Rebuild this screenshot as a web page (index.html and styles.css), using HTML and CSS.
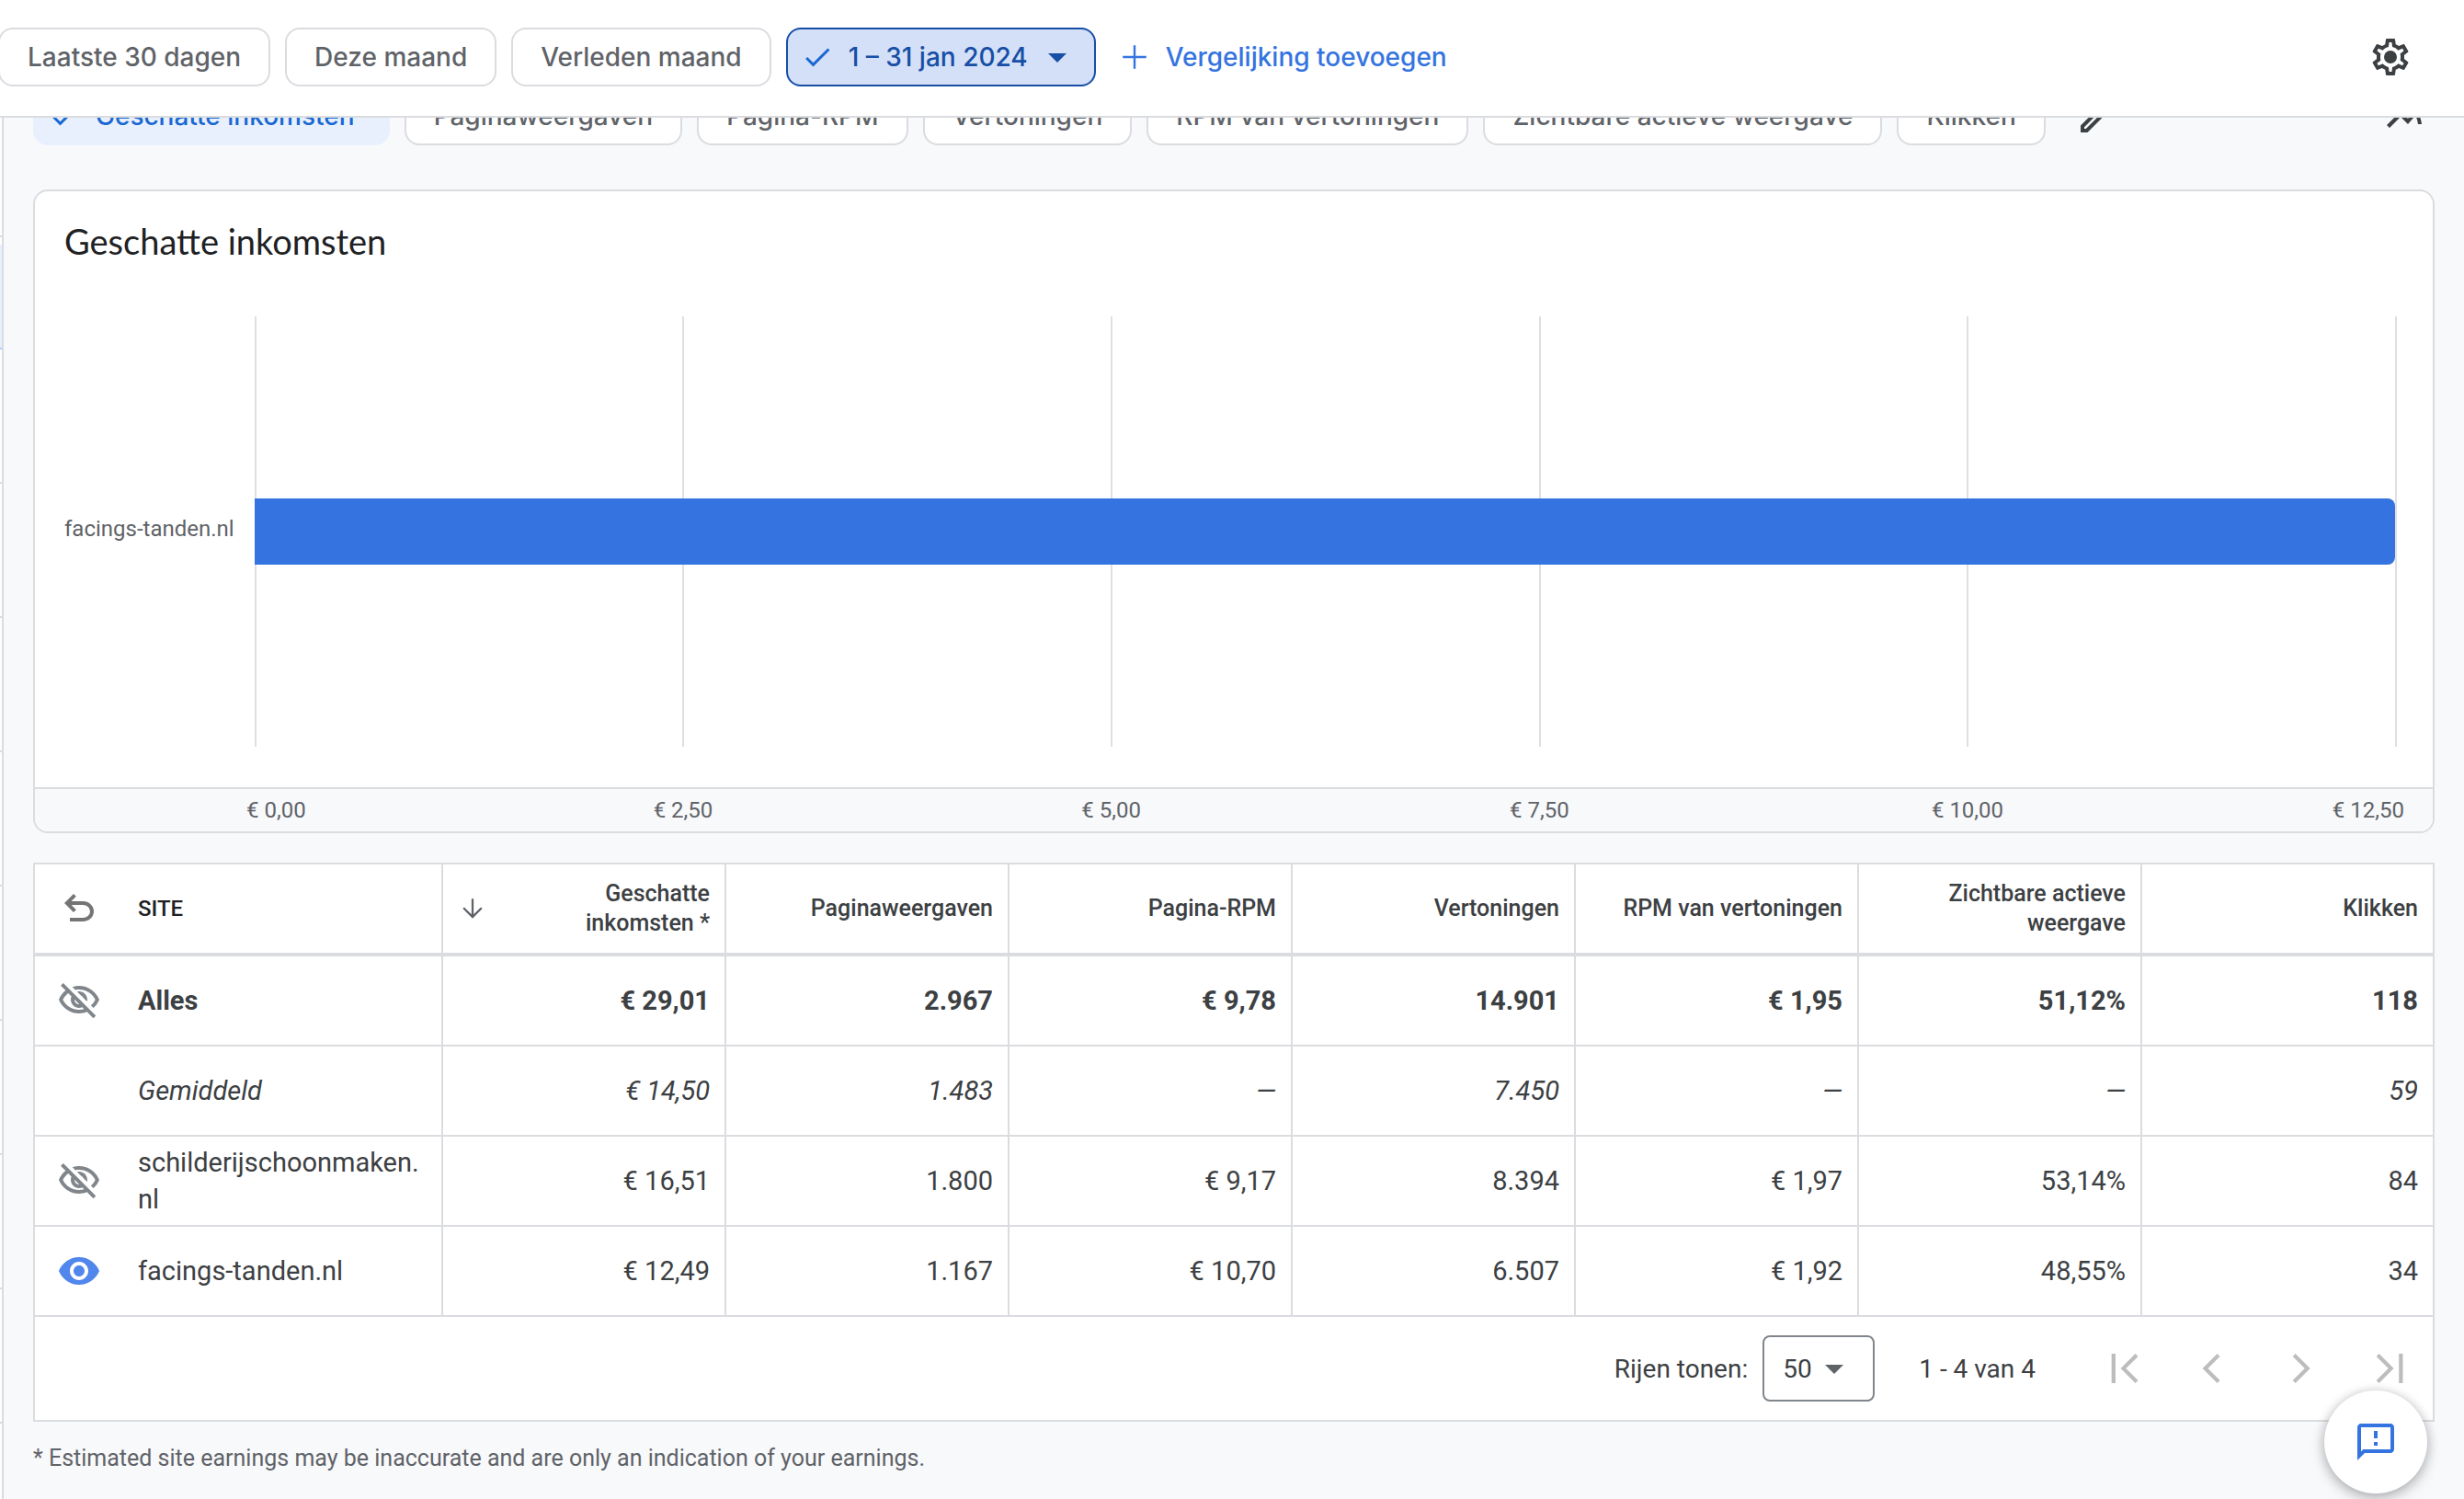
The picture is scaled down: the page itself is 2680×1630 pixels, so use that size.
FILE: index.html
```html
<!DOCTYPE html>
<html lang="nl">
  <head>
    <meta charset="UTF-8" />
    <meta name="viewport" content="width=device-width, initial-scale=1.0" />
    <title>Rapporten</title>
    <link rel="stylesheet" href="styles.css">
  </head>
  <body>
    <header class="topbar">
      <button class="chip">Laatste 30 dagen</button>
      <button class="chip">Deze maand</button>
      <button class="chip">Verleden maand</button>
      <button class="chip chip-date">
        <svg class="icon-check" viewBox="0 0 24 24"><path d="M9 16.17L4.83 12l-1.42 1.41L9 19 21 7l-1.41-1.41z" /></svg>
        1 – 31 jan 2024
        <svg class="icon" viewBox="0 0 24 24"><path d="M7 10l5 5 5-5z" /></svg>
      </button>
      <button class="compare">
        <svg class="icon-check" viewBox="0 0 24 24"><path d="M20.5 12.8h-7.7v7.7h-1.6v-7.7H3.5v-1.6h7.7V3.5h1.6v7.7h7.7z" /></svg>
        Vergelijking toevoegen
      </button>
      <button class="icon-button settings" aria-label="Instellingen">
        <svg class="icon" viewBox="0 0 24 24"><path d="M19.43 12.98c.04-.32.07-.64.07-.98 0-.34-.03-.66-.07-.98l2.11-1.65c.19-.15.24-.42.12-.64l-2-3.46c-.09-.16-.26-.25-.44-.25-.06 0-.12.01-.17.03l-2.49 1c-.52-.4-1.08-.73-1.69-.98l-.38-2.65C14.46 2.18 14.25 2 14 2h-4c-.25 0-.46.18-.49.42l-.38 2.65c-.61.25-1.17.59-1.69.98l-2.49-1c-.06-.02-.12-.03-.18-.03-.17 0-.34.09-.43.25l-2 3.46c-.13.22-.07.49.12.64l2.11 1.65c-.04.32-.07.65-.07.98 0 .33.03.66.07.98l-2.11 1.65c-.19.15-.24.42-.12.64l2 3.46c.09.16.26.25.44.25.06 0 .12-.01.17-.03l2.49-1c.52.4 1.08.73 1.69.98l.38 2.65c.03.24.24.42.49.42h4c.25 0 .46-.18.49-.42l.38-2.65c.61-.25 1.17-.59 1.69-.98l2.49 1c.06.02.12.03.18.03.17 0 .34-.09.43-.25l2-3.46c.12-.22.07-.49-.12-.64l-2.11-1.65zm-1.98-1.71c.04.31.05.52.05.73 0 .21-.02.43-.05.73l-.14 1.13.89.7 1.08.84-.7 1.21-1.27-.51-1.04-.42-.9.68c-.43.32-.84.56-1.25.73l-1.06.43-.16 1.13-.2 1.35h-1.4l-.19-1.35-.16-1.13-1.06-.43c-.43-.18-.83-.41-1.23-.71l-.91-.7-1.06.43-1.27.51-.7-1.21 1.08-.84.89-.7-.14-1.13c-.03-.31-.05-.54-.05-.74s.02-.43.05-.73l.14-1.13-.89-.7-1.08-.84.7-1.21 1.27.51 1.04.42.9-.68c.43-.32.84-.56 1.25-.73l1.06-.43.16-1.13.2-1.35h1.39l.19 1.35.16 1.13 1.06.43c.43.18.83.41 1.23.71l.91.7 1.06-.43 1.27-.51.7 1.21-1.07.85-.89.7.14 1.13z" /><circle cx="12" cy="12" r="3.5" /></svg>
      </button>
    </header>

    <div class="layout">
      <nav class="rail">
        <div class="rail-item rail-first"></div>
        <div class="rail-item rail-active"></div>
        <div class="rail-item"></div>
        <div class="rail-item"></div>
        <div class="rail-item"></div>
        <div class="rail-item"></div>
        <div class="rail-item"></div>
        <div class="rail-item"></div>
        <div class="rail-item"></div>
        <div class="rail-item"></div>
      </nav>

      <main class="report">
        <div class="metrics">
          <button class="chip chip-metric">
            <svg class="icon-check" viewBox="0 0 24 24"><path d="M9 16.17L4.83 12l-1.42 1.41L9 19 21 7l-1.41-1.41z" /></svg>
            Geschatte inkomsten
          </button>
          <button class="chip">Paginaweergaven</button>
          <button class="chip">Pagina-RPM</button>
          <button class="chip">Vertoningen</button>
          <button class="chip">RPM van vertoningen</button>
          <button class="chip">Zichtbare actieve weergave</button>
          <button class="chip">Klikken</button>
          <button class="icon-button edit" aria-label="Bewerken">
            <svg class="icon" viewBox="0 0 24 24"><path d="M3 17.25V21h3.75L17.81 9.94l-3.75-3.75L3 17.25zM5.92 19H5v-.92l9.06-9.06.92.92L5.92 19zM20.71 5.63l-2.34-2.34c-.39-.39-1.02-.39-1.41 0l-1.83 1.83 3.75 3.75 1.83-1.83c.39-.39.39-1.02 0-1.41z" /></svg>
          </button>
          <button class="icon-button chart-type" aria-label="Diagramtype">
            <svg class="icon" viewBox="0 0 24 24"><path d="M22 6.92l-1.41-1.41-2.85 3.21C15.68 6.4 12.83 5 9.61 5 6.72 5 4.07 6.16 2 8l1.42 1.42C5.12 7.93 7.27 7 9.61 7c2.74 0 5.09 1.26 6.77 3.24l-2.88 3.24-4-4L2 16.99l1.5 1.5 6-6.01 4 4 4.05-4.55c.75 1.35 1.25 2.9 1.44 4.55H21c-.22-2.3-.95-4.39-2.04-6.14L22 6.92z" /></svg>
          </button>
        </div>

        <section class="card">
          <h2>Geschatte inkomsten</h2>
          <div class="chart">
            <span class="chart-label">facings-tanden.nl</span>
            <div class="plot">
              <div class="gridlines"><i></i><i></i><i></i><i></i><i></i></div>
              <div class="bar" style="width: 99.92%"></div>
            </div>
          </div>
          <div class="axis">
            <span>€ 0,00</span>
            <span>€ 2,50</span>
            <span>€ 5,00</span>
            <span>€ 7,50</span>
            <span>€ 10,00</span>
            <span>€ 12,50</span>
          </div>
        </section>

        <section class="data">
          <table>
            <thead>
              <tr>
                <th class="site">
                  <div class="site-cell">
                    <button class="icon-button" aria-label="Terug"><svg class="icon icon-undo" viewBox="0 -960 960 960"><path d="M280-200v-80h284q63 0 109.5-40T720-420q0-60-46.5-100T564-560H312l104 104-56 56-200-200 200-200 56 56-104 104h252q97 0 166.5 63T800-420q0 94-69.5 157T564-200H280Z" /></svg></button>
                    <span class="site-title">SITE</span>
                  </div>
                </th>
                <th>
                  <div class="sorted">
                    <svg class="icon-sort" viewBox="0 0 24 24"><path d="M20 12l-1.2-1.2-5.95 5.95V4h-1.7v12.75L5.2 10.8 4 12l8 8 8-8z" /></svg>
                    <span>Geschatte<br />inkomsten *</span>
                  </div>
                </th>
                <th>Paginaweergaven</th>
                <th>Pagina-RPM</th>
                <th>Vertoningen</th>
                <th>RPM van vertoningen</th>
                <th>Zichtbare actieve<br />weergave</th>
                <th class="clicks">Klikken</th>
              </tr>
            </thead>
            <tbody>
              <tr class="total">
                <td>
                  <div class="site-cell">
                    <button class="icon-button" aria-label="Alles tonen"><svg class="icon icon-hidden" viewBox="0 0 24 24"><path id="eye-off" d="M12 6c3.79 0 7.17 2.13 8.82 5.5-.59 1.22-1.42 2.27-2.41 3.12l1.41 1.41c1.39-1.23 2.49-2.77 3.18-4.53C21.27 7.11 17 4 12 4c-1.27 0-2.49.2-3.64.57l1.65 1.65C10.66 6.09 11.32 6 12 6zm-1.07 1.14L13 9.21c.57.25 1.03.71 1.28 1.28l2.07 2.07c.08-.34.14-.7.14-1.07C16.5 9.01 14.48 7 12 7c-.37 0-.72.05-1.07.14zM2.01 3.87l2.68 2.68C3.06 7.83 1.77 9.53 1 11.5 2.73 15.89 7 19 12 19c1.52 0 2.98-.29 4.32-.82l3.42 3.42 1.41-1.41L3.42 2.45 2.01 3.87zm7.5 7.5l2.61 2.61c-.04.01-.08.02-.12.02-1.38 0-2.5-1.12-2.5-2.5 0-.05.01-.08.01-.13zm-3.4-3.4l1.75 1.75c-.23.55-.36 1.15-.36 1.78 0 2.48 2.02 4.5 4.5 4.5.63 0 1.23-.13 1.77-.36l.98.98c-.88.24-1.8.38-2.75.38-3.79 0-7.17-2.13-8.82-5.5.7-1.43 1.72-2.61 2.93-3.53z" /></svg></button>
                    <span>Alles</span>
                  </div>
                </td>
                <td>€ 29,01</td>
                <td>2.967</td>
                <td>€ 9,78</td>
                <td>14.901</td>
                <td>€ 1,95</td>
                <td>51,12%</td>
                <td>118</td>
              </tr>
              <tr class="average">
                <td>
                  <div class="site-cell"><span class="icon"></span><span>Gemiddeld</span></div>
                </td>
                <td>€ 14,50</td>
                <td>1.483</td>
                <td>—</td>
                <td>7.450</td>
                <td>—</td>
                <td>—</td>
                <td>59</td>
              </tr>
              <tr>
                <td>
                  <div class="site-cell">
                    <button class="icon-button" aria-label="schilderijschoonmaken.nl tonen"><svg class="icon icon-hidden" viewBox="0 0 24 24"><use href="#eye-off" /></svg></button>
                    <span>schilderijschoonmaken.<wbr />nl</span>
                  </div>
                </td>
                <td>€ 16,51</td>
                <td>1.800</td>
                <td>€ 9,17</td>
                <td>8.394</td>
                <td>€ 1,97</td>
                <td>53,14%</td>
                <td>84</td>
              </tr>
              <tr>
                <td>
                  <div class="site-cell">
                    <button class="icon-button" aria-label="facings-tanden.nl verbergen"><svg class="icon icon-visible" viewBox="0 0 24 24"><path d="M12 4.5C7 4.5 2.73 7.61 1 12c1.73 4.39 6 7.5 11 7.5s9.27-3.11 11-7.5c-1.73-4.39-6-7.5-11-7.5zM12 17c-2.76 0-5-2.24-5-5s2.24-5 5-5 5 2.24 5 5-2.24 5-5 5zm0-8c-1.66 0-3 1.34-3 3s1.34 3 3 3 3-1.34 3-3-1.34-3-3-3z" /></svg></button>
                    <span>facings-tanden.nl</span>
                  </div>
                </td>
                <td>€ 12,49</td>
                <td>1.167</td>
                <td>€ 10,70</td>
                <td>6.507</td>
                <td>€ 1,92</td>
                <td>48,55%</td>
                <td>34</td>
              </tr>
            </tbody>
          </table>
          <div class="pager">
            <label for="rows">Rijen tonen:</label>
            <div class="select">
              <select id="rows">
                <option>50</option>
                <option>100</option>
              </select>
              <svg class="icon" viewBox="0 0 24 24"><path d="M7 10l5 5 5-5z" /></svg>
            </div>
            <span class="range">1 - 4 van 4</span>
            <button class="page-button" aria-label="Eerste pagina" disabled><svg viewBox="0 0 24 24"><path d="M17.8 7.1L16.7 6l-6 6 6 6 1.1-1.1-4.9-4.9zM7 6h1.6v12H7z" /></svg></button>
            <button class="page-button" aria-label="Vorige pagina" disabled><svg viewBox="0 0 24 24"><path d="M15.2 7.1L14.1 6l-6 6 6 6 1.1-1.1-4.9-4.9z" /></svg></button>
            <button class="page-button" aria-label="Volgende pagina" disabled><svg viewBox="0 0 24 24"><path d="M8.9 7.1L10 6l6 6-6 6-1.1-1.1 4.9-4.9z" /></svg></button>
            <button class="page-button" aria-label="Laatste pagina" disabled><svg viewBox="0 0 24 24"><path d="M7 7.1L8.1 6l6 6-6 6L7 16.9l4.900-4.900zM16.200 6h1.600v12h-1.600z" /></svg></button>
          </div>
        </section>

        <p class="footnote">* Estimated site earnings may be inaccurate and are only an indication of your earnings.</p>
      </main>
    </div>

    <button class="feedback" aria-label="Feedback">
      <svg class="icon" viewBox="0 0 24 24"><path d="M20 2H4c-1.1 0-1.99.9-1.99 2L2 22l4-4h14c1.1 0 2-.9 2-2V4c0-1.1-.9-2-2-2zm0 14H5.17l-.59.59-.58.58V4h16v12zm-9-4h2v2h-2zm0-6h2v4h-2z" /></svg>
    </button>
  </body>
</html>
```
FILE: styles.css
```css
* {
  box-sizing: border-box;
}
body {
  display: flex;
  flex-direction: column;
  height: 100vh;
  margin: 0;
  overflow: hidden;
  background: #f8f9fb;
  color: #3c4043;
  font-family: Roboto, sans-serif;
  font-size: 28px;
}
button {
  background: none;
  border: 0;
  margin: 0;
  padding: 0;
  font-family: inherit;
  color: inherit;
  cursor: pointer;
}
svg {
  display: block;
  flex: none;
  fill: currentColor;
}
.icon {
  width: 48px;
  height: 48px;
}
.icon-check {
  width: 36px;
  height: 36px;
}

/* Top bar */
.topbar {
  display: flex;
  flex: none;
  align-items: center;
  gap: 16px;
  height: 128px;
  margin-left: -2px;
  padding: 0 56px 2px 0;
  background: #fff;
  border-bottom: 2px solid #dadce0;
  position: relative;
  z-index: 1;
}
.chip,
.compare {
  display: flex;
  align-items: center;
  height: 64px;
  padding: 0 30px;
  font-family: Inter, sans-serif;
  font-size: 28px;
  font-weight: 500;
  white-space: nowrap;
}
.chip {
  background: #fff;
  border: 2px solid #dadce0;
  border-radius: 16px;
  color: #5f6368;
}
.chip-date {
  gap: 16px;
  padding: 0 16px 0 14px;
  background: #d4e0f7;
  border-color: #174ea6;
  color: #174ea6;
}
.chip-date .icon-check {
  fill: #1967d2;
}
.chip-date .icon {
  margin-left: -8px;
}
.compare {
  gap: 16px;
  padding: 0 8px;
  color: #3574e0;
}
.settings {
  margin-left: auto;
  color: #3c4043;
}

.layout {
  display: flex;
  flex: 1;
  min-height: 0;
}

/* Edge of the navigation */
.rail {
  flex: none;
  width: 4px;
  background: #fff;
  border-right: 2px solid #dadce0;
}
.rail-item {
  height: 146px;
  border-bottom: 2px solid #dadce0;
}
.rail-first {
  height: 130px;
}
.rail-active {
  height: 114px;
  margin-top: 8px;
  background: #e8f0fe;
  border-bottom-color: #aecbfa;
}

/* Report */
.report {
  flex: 1;
  min-width: 0;
  padding: 0 32px;
}
.metrics {
  display: flex;
  align-items: center;
  gap: 16px;
  margin-top: -34px;
  padding-right: 8px;
}
.chip-metric {
  gap: 16px;
  padding: 0 36px 0 14px;
  background: #e8f0fe;
  border-color: #e8f0fe;
  color: #1967d2;
}
.edit {
  margin-left: 16px;
}
.chart-type {
  margin-left: auto;
}

/* Chart */
.card {
  margin-top: 48px;
  background: #fff;
  border: 2px solid #dadce0;
  border-radius: 16px;
  overflow: hidden;
}
h2 {
  margin: 30px 32px 58px;
  color: #202124;
  font-family: Lato, sans-serif;
  font-size: 38px;
  font-weight: 400;
  line-height: 48px;
}
.chart {
  display: flex;
  align-items: center;
  gap: 22px;
  padding: 0 39px 44px 32px;
}
.chart-label,
.axis {
  color: #5f6368;
  font-size: 24px;
}
.chart-label {
  padding-bottom: 6px;
}
.plot {
  display: grid;
  flex: 1;
  align-items: center;
}
.gridlines,
.bar {
  grid-area: 1 / 1;
}
.gridlines {
  display: flex;
  height: 468px;
  border-right: 2px solid #e0e0e0;
}
.gridlines i {
  flex: 1;
  border-left: 2px solid #e0e0e0;
}
.bar {
  height: 72px;
  background: #3574e0;
  border-radius: 0 8px 8px 0;
}
.axis {
  display: grid;
  grid-template-columns: 13fr repeat(4, 25fr) 13fr;
  padding: 0 31px 0 230px;
  background: #f8f9fb;
  border-top: 2px solid #dadce0;
  line-height: 46px;
  text-align: center;
}
.axis span:first-child {
  text-align: left;
}
.axis span:last-child {
  text-align: right;
}

/* Table */
.data {
  margin-top: 32px;
  background: #fff;
  border: 2px solid #dadce0;
}
table {
  width: 100%;
  table-layout: fixed;
  border-spacing: 0;
}
th,
td {
  height: 98px;
  padding: 0 16px;
  border-right: 2px solid #dadce0;
  border-bottom: 2px solid #dadce0;
  font-size: 29px;
  line-height: 40px;
  text-align: right;
}
th {
  height: 100px;
  border-bottom-width: 4px;
  font-size: 25px;
  font-weight: 500;
  line-height: 32px;
}
th:last-child,
td:last-child {
  border-right: 0;
}
.site {
  width: 444px;
}
.clicks {
  width: 316px;
}
th:first-child,
td:first-child {
  padding: 0 24px;
  text-align: left;
}
.site-cell {
  display: flex;
  align-items: center;
  gap: 40px;
}
.site-title {
  color: #202124;
  font-size: 24px;
}
.sorted {
  display: flex;
  align-items: center;
  justify-content: space-between;
}
.icon-sort {
  width: 32px;
  height: 32px;
  fill: #5f6368;
}
.icon-undo {
  fill: #757575;
}
.icon-hidden {
  fill: #80868b;
}
.icon-visible {
  fill: #5186ec;
}
.total td {
  font-weight: 700;
}
.average td {
  font-style: italic;
}

/* Pager */
.pager {
  display: flex;
  align-items: center;
  justify-content: flex-end;
  height: 112px;
}
.select {
  display: grid;
  align-items: center;
  margin: 0 48px 0 16px;
}
.select select,
.select .icon {
  grid-area: 1 / 1;
}
.select select {
  width: 122px;
  height: 72px;
  padding: 0 20px;
  appearance: none;
  background: #fff;
  border: 2px solid #80868b;
  border-radius: 8px;
  color: #3c4043;
  font-family: inherit;
  font-size: 28px;
}
.select .icon {
  justify-self: end;
  margin-right: 20px;
  color: #5f6368;
  pointer-events: none;
}
.range {
  margin-right: 48px;
}
.page-button {
  display: flex;
  justify-content: center;
  width: 96px;
  color: #bdbdbd;
}
.page-button svg {
  width: 64px;
  height: 64px;
}

.footnote {
  margin: 24px 0;
  color: #5f6368;
  font-size: 25px;
  line-height: 32px;
}

/* Floating button over the page */
.feedback {
  display: flex;
  align-items: center;
  justify-content: center;
  position: fixed;
  right: 40px;
  bottom: 6px;
  width: 112px;
  height: 112px;
  background: #fff;
  border-radius: 50%;
  box-shadow: 0 2px 12px rgba(60, 64, 67, 0.3), 0 6px 16px rgba(60, 64, 67, 0.2);
  color: #3574e0;
}
```
